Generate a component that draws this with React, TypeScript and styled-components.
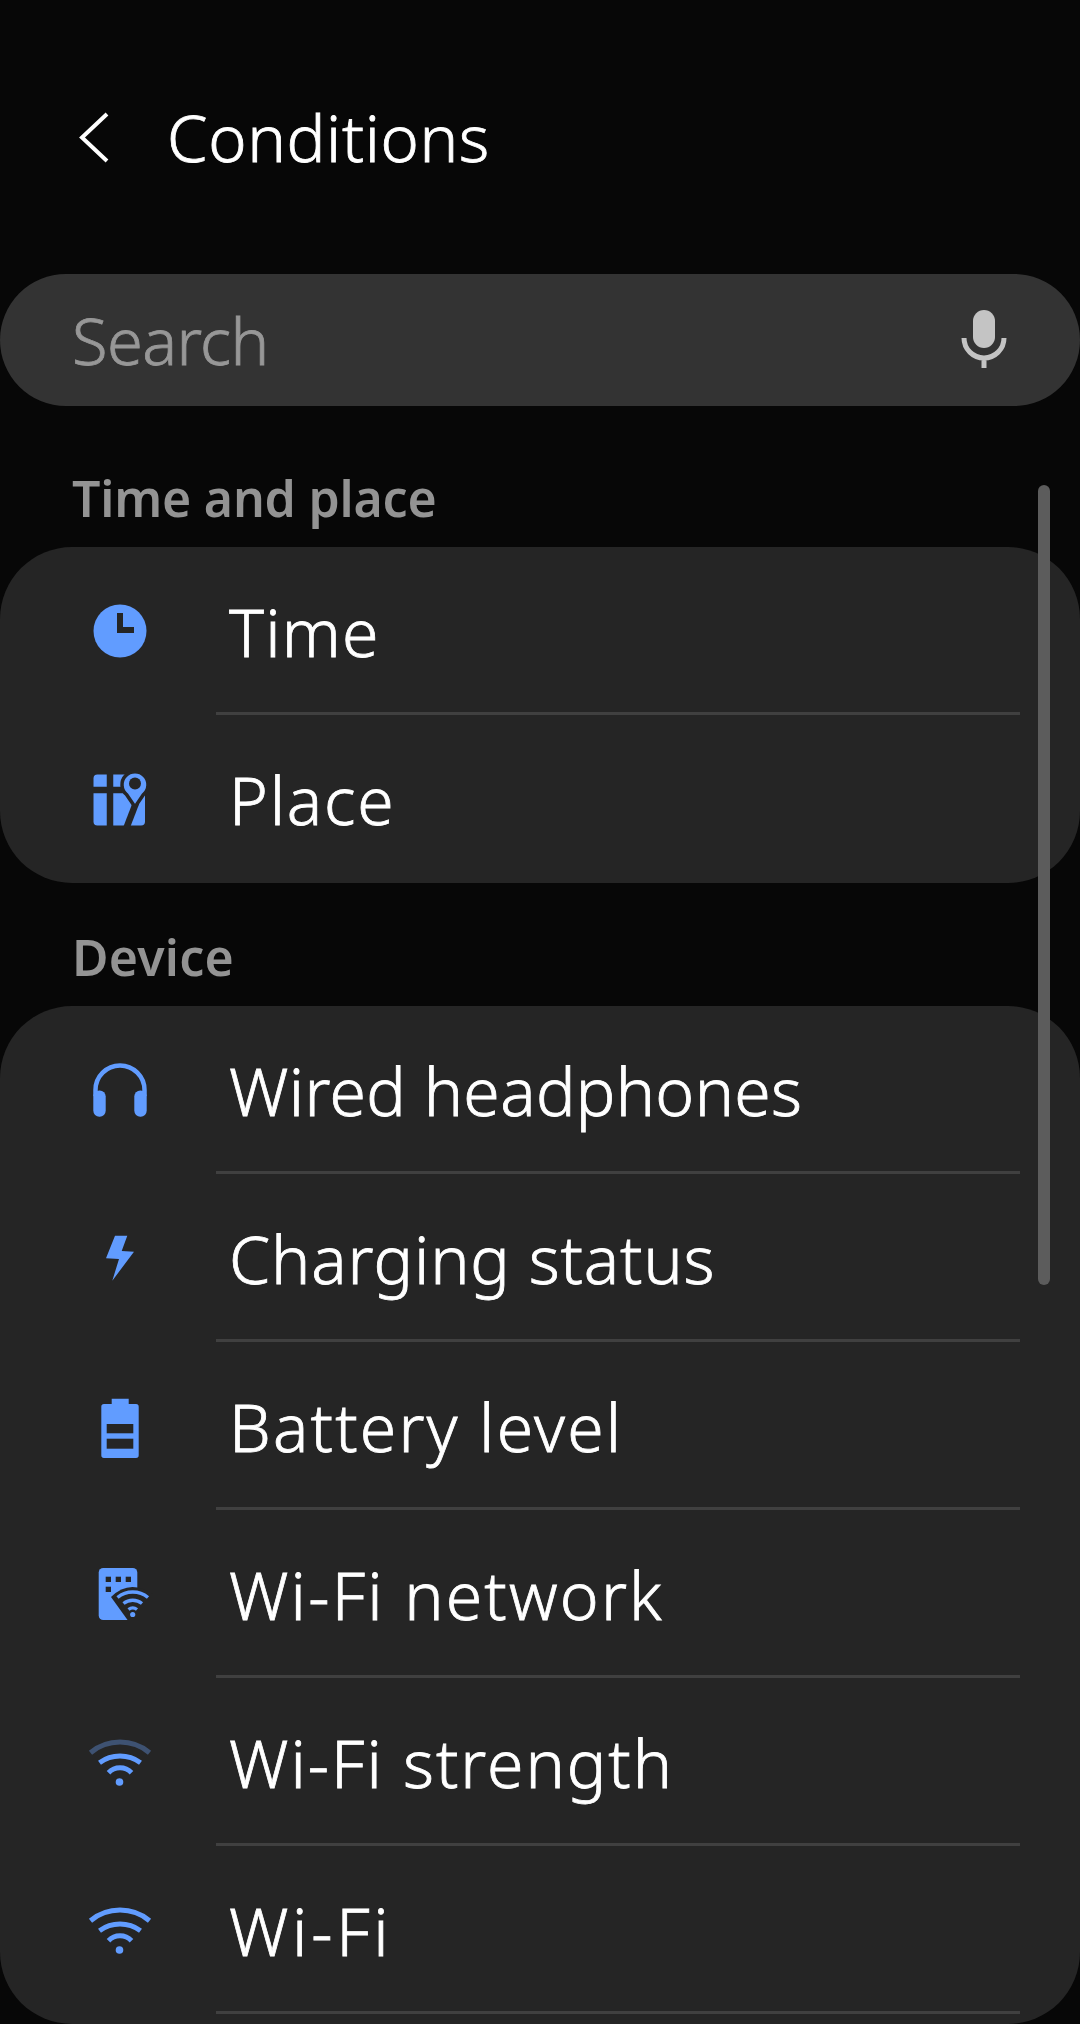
import React from "react"
import styled, { createGlobalStyle } from "styled-components"

const BLUE = "#619cff"
const CARD = "#252525"

const GlobalStyle = createGlobalStyle`
    html, body {
        margin: 0;
        padding: 0;
        background: #070707;
    }
    * {
        box-sizing: border-box;
    }
`

const Page = styled.div`
    position: relative;
    width: 1080px;
    height: 2024px;
    overflow: hidden;
    background: #070707;
    color: #fff;
    font-family: "Noto Sans", sans-serif;
`

const Header = styled.header`
    display: flex;
    align-items: center;
    height: 274px;
    padding-left: 74px;
`

const BackButton = styled.svg`
    width: 40px;
    height: 60px;
    margin-right: 53px;
    flex: none;
`

const Title = styled.h1`
    margin: 0;
    font-size: 65px;
    font-weight: 300;
    letter-spacing: 0.65px;
    -webkit-text-stroke: 0.8px currentColor;
`

const SearchBar = styled.div`
    display: flex;
    align-items: center;
    justify-content: space-between;
    height: 132px;
    padding: 0 66px 0 72px;
    border-radius: 66px;
    background: #333333;
`

const SearchText = styled.span`
    font-size: 65px;
    font-weight: 300;
    color: #979797;
    letter-spacing: -0.6px;
    -webkit-text-stroke: 0.8px currentColor;
`

const MicIcon = styled.svg`
    width: 60px;
    height: 60px;
    flex: none;
`

const SectionLabel = styled.h2<{ $tall?: boolean }>`
    display: flex;
    align-items: flex-end;
    height: ${(props) => (props.$tall ? "141px" : "123px")};
    margin: 0;
    padding: 0 0 15px 72px;
    font-size: 50px;
    font-weight: 600;
    line-height: 68px;
    letter-spacing: ${(props) => (props.$tall ? "-0.2px" : "0.2px")};
    color: #939393;
`

const Card = styled.section<{ $fill?: boolean }>`
    background: ${CARD};
    border-radius: 72px;
    ${(props) => props.$fill && "height: 1018px;"}
`

const Row = styled.div<{ $divider?: boolean }>`
    position: relative;
    display: flex;
    align-items: center;
    height: 168px;
    padding-left: 80px;
    ${(props) =>
        props.$divider &&
        `
        &::after {
            content: "";
            position: absolute;
            left: 216px;
            right: 60px;
            bottom: 0;
            height: 3px;
            background: #404040;
        }
    `}
`

const IconBox = styled.svg`
    width: 80px;
    height: 80px;
    margin-right: 69px;
    flex: none;
`

const RowText = styled.span<{ $tracking: number }>`
    font-size: 66px;
    font-weight: 300;
    letter-spacing: ${(props) => props.$tracking}px;
    -webkit-text-stroke: 0.8px currentColor;
`

const ScrollBar = styled.div`
    position: absolute;
    left: 1038px;
    top: 485px;
    width: 12px;
    height: 800px;
    border-radius: 6px;
    background: #5c5c5c;
`

const ClockIcon = () => (
    <IconBox viewBox="0 0 80 80">
        <circle cx="40" cy="40" r="26.5" fill={BLUE} />
        <path d="M37 22v20h17v-6H43V22z" fill={CARD} />
    </IconBox>
)

const PlaceIcon = () => (
    <IconBox viewBox="0 0 80 80">
        <rect x="13.5" y="15.5" width="51.5" height="51" rx="4" fill={BLUE} />
        <path d="M30 14v54M12 31h36" stroke={CARD} strokeWidth="6.5" />
        <path d="M56 44L46 70" stroke={CARD} strokeWidth="6.5" />
        <path
            d="M55 48L46.5 35.5A13 13 0 1 1 63.5 35.5Z"
            fill={BLUE}
            stroke={CARD}
            strokeWidth="3.5"
        />
        <circle cx="55" cy="24.5" r="6" fill={CARD} />
    </IconBox>
)

const HeadphonesIcon = () => (
    <IconBox viewBox="0 0 80 80">
        <path d="M15.5 46V40A24.5 24.5 0 0 1 64.5 40V46" fill="none" stroke={BLUE} strokeWidth="4.5" />
        <rect x="13.3" y="40.5" width="12.4" height="26.2" rx="6" fill={BLUE} />
        <rect x="54.3" y="40.5" width="12.4" height="26.2" rx="6" fill={BLUE} />
    </IconBox>
)

const BoltIcon = () => (
    <IconBox viewBox="0 0 80 80">
        <path d="M35 17.7H47.3L41.7 33 54 33.7 32.3 62.7 39 41 26 40.3Z" fill={BLUE} />
    </IconBox>
)

const BatteryIcon = () => (
    <IconBox viewBox="0 0 80 80">
        <path
            d="M31.7 12.7H48.7V18H56A2.7 2.7 0 0 1 58.7 20.7V69.3A2.7 2.7 0 0 1 56 72H24A2.7 2.7 0 0 1 21.3 69.3V20.7A2.7 2.7 0 0 1 24 18H31.7Z"
            fill={BLUE}
        />
        <rect x="26.7" y="38" width="26.6" height="9.3" fill={CARD} />
        <rect x="26.7" y="52.7" width="26.6" height="10" fill={CARD} />
    </IconBox>
)

const WifiNetworkIcon = () => (
    <IconBox viewBox="0 0 80 80">
        <rect x="18.7" y="14" width="38.6" height="52" rx="4.5" fill={BLUE} />
        <g fill={CARD}>
            <rect x="25.7" y="22.7" width="5.3" height="5.3" />
            <rect x="35.7" y="22.7" width="5.3" height="5.3" />
            <rect x="45.7" y="22.7" width="5.3" height="5.3" />
            <rect x="25.7" y="32.7" width="5.3" height="5.3" />
            <path d="M49 68L31 43Q50 24 74 41V68Z" />
        </g>
        <g fill="none" stroke={BLUE} strokeWidth="3.4">
            <path d="M37.5 43.5A24 24 0 0 1 68 43.5" />
            <path d="M43.5 49.5A15 15 0 0 1 62 49.5" />
            <path d="M48.5 55.5A7 7 0 0 1 57 55.5" />
        </g>
        <circle cx="52.7" cy="60.5" r="2.6" fill={BLUE} />
    </IconBox>
)

const WifiIcon: React.FC<{ dimOuter?: boolean }> = ({ dimOuter }) => (
    <IconBox viewBox="0 0 80 80">
        <g fill="none" stroke={BLUE} strokeWidth="5">
            <path d="M10.5 30.7A46.4 46.4 0 0 1 69.5 30.7" stroke={dimOuter ? "#3e5272" : BLUE} />
            <path d="M19.5 40.7A35 35 0 0 1 60.5 40.7" />
            <path d="M28.5 50.7A16 16 0 0 1 51.5 50.7" />
        </g>
        <circle cx="39.5" cy="60" r="3.8" fill={BLUE} />
    </IconBox>
)

const App: React.FC = () => {
    return (
        <Page>
            <GlobalStyle />
            <Header>
                <BackButton viewBox="0 0 40 60">
                    <path d="M33 7L8 30.5 33 54" fill="none" stroke="#fff" strokeWidth="4" />
                </BackButton>
                <Title>Conditions</Title>
            </Header>
            <SearchBar>
                <SearchText>Search</SearchText>
                <MicIcon viewBox="0 0 60 60">
                    <rect x="19" y="0" width="22" height="38" rx="11" fill="#c4c4c4" />
                    <path d="M10 28A20 20 0 0 0 50 28M30 47V58" fill="none" stroke="#c4c4c4" strokeWidth="5" />
                </MicIcon>
            </SearchBar>
            <SectionLabel $tall>Time and place</SectionLabel>
            <Card>
                <Row $divider>
                    <ClockIcon />
                    <RowText $tracking={1.2}>Time</RowText>
                </Row>
                <Row>
                    <PlaceIcon />
                    <RowText $tracking={1.8}>Place</RowText>
                </Row>
            </Card>
            <SectionLabel>Device</SectionLabel>
            <Card $fill>
                <Row $divider>
                    <HeadphonesIcon />
                    <RowText $tracking={0.35}>Wired headphones</RowText>
                </Row>
                <Row $divider>
                    <BoltIcon />
                    <RowText $tracking={0.85}>Charging status</RowText>
                </Row>
                <Row $divider>
                    <BatteryIcon />
                    <RowText $tracking={2.2}>Battery level</RowText>
                </Row>
                <Row $divider>
                    <WifiNetworkIcon />
                    <RowText $tracking={2.2}>Wi-Fi network</RowText>
                </Row>
                <Row $divider>
                    <WifiIcon dimOuter />
                    <RowText $tracking={2}>Wi-Fi strength</RowText>
                </Row>
                <Row $divider>
                    <WifiIcon />
                    <RowText $tracking={3.7}>Wi-Fi</RowText>
                </Row>
            </Card>
            <ScrollBar />
        </Page>
    )
}

export default App
